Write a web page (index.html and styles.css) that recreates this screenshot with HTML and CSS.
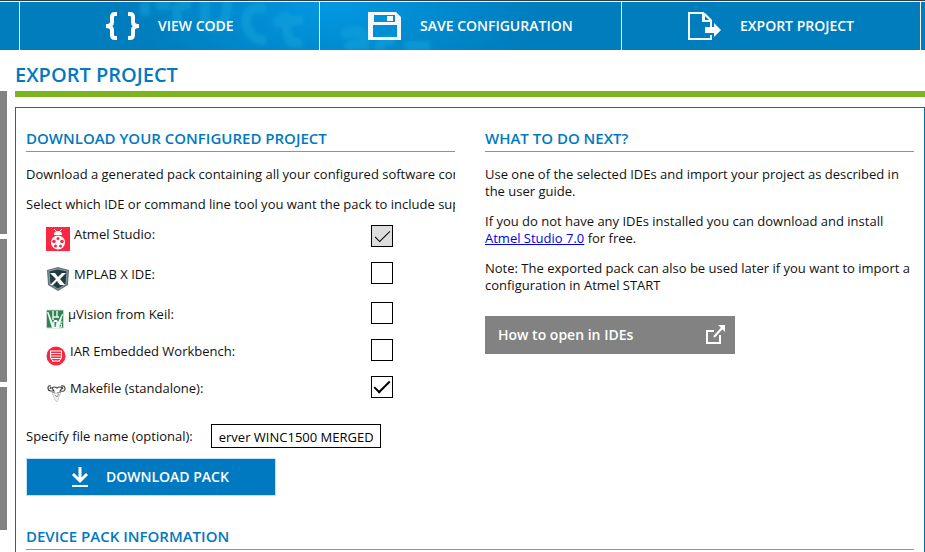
FILE: index.html
```html
<!DOCTYPE html>
<html lang="en">
<head>
<meta charset="utf-8">
<title>Export project</title>
<link rel="stylesheet" href="styles.css">
</head>
<body>
<nav class="toolbar">
  <svg class="backdrop" viewBox="0 0 925 48" preserveAspectRatio="none" aria-hidden="true">
    <defs>
      <radialGradient id="glow"><stop offset="0" stop-color="#0298e2"/><stop offset="1" stop-color="#0298e2" stop-opacity="0"/></radialGradient>
      <filter id="soft"><feGaussianBlur stdDeviation="2"/></filter>
    </defs>
    <ellipse cx="335" cy="4" rx="205" ry="90" fill="url(#glow)"/>
    <g fill="none" stroke="#1ba6dc" stroke-opacity=".5" stroke-width="10" filter="url(#soft)">
      <path d="M145 0v14M156 3h14M177 22V6q4-5 14-3M205-4v16q0 14 12 12q11-2 10-28M266 7q-19-4-20 12q2 20 20 19M284 10l4 24q2 9 14 6M274 20l29-2"/>
      <path d="M342 33q15-7 22 0v15M348 48q2-8 16-6M380 48q-2-12 15-10M405 44h25"/>
    </g>
  </svg>
  <button class="tool" type="button">
    <svg class="tool-icon" viewBox="0 0 34 28" aria-hidden="true"><path d="M11 2H9Q6 2 6 5v5q0 4-6 4q6 0 6 4v5q0 3 3 3h2M22 2h2q3 0 3 3v5q0 4 6 4q-6 0-6 4v5q0 3-3 3h-2" fill="none" stroke="#fff" stroke-width="4"/></svg>
    <span>VIEW CODE</span>
  </button>
  <button class="tool tool-save" type="button">
    <svg class="tool-icon" viewBox="0 0 34 28" aria-hidden="true"><path fill="#f4f8fb" fill-rule="evenodd" d="M0 0h28l5 5v23H0zM6 3v7h21V3zM5 13v12h24V13z"/><path fill="#f4f8fb" d="M19 4h6v5h-6z"/></svg>
    <span>SAVE CONFIGURATION</span>
  </button>
  <button class="tool tool-export" type="button">
    <svg class="tool-icon" viewBox="0 0 34 28" aria-hidden="true"><path fill="none" stroke="#f4f8fb" stroke-width="2" d="M23 23v4H1V1h14l8 8v6M15 1v8h8"/><path fill="#f4f8fb" d="M14 1h3l7 7v2H14z"/><path fill="#007dbd" d="M17 4l4 4h-4z"/><path fill="#fff" d="M17 15h9v-4l7 7-7 7v-4h-9z"/></svg>
    <span>EXPORT PROJECT</span>
  </button>
</nav>
<div class="page">
  <aside class="rail"><div></div><div></div><div></div></aside>
  <main class="main">
    <h1>EXPORT PROJECT</h1>
    <div class="panel">
      <div class="columns">
        <section class="download">
          <h2>DOWNLOAD YOUR CONFIGURED PROJECT</h2>
          <p class="clip">Download a generated pack containing all your configured software components.</p>
          <p class="clip">Select which IDE or command line tool you want the pack to include support for:</p>
          <ul class="tools">
            <li class="row row-large">
              <label for="studio"><svg class="logo logo-large" viewBox="0 0 24 24" aria-hidden="true"><path fill="#fb2841" d="M0 0h24v24H0z"/><path fill="none" stroke="#fff" d="M8 2l3 3M16 2l-3 3"/><path fill="#fff" d="M8 8q0-4 4-4t4 4z"/><ellipse cx="12" cy="15.500" rx="7" ry="7" fill="#fff"/><g fill="#fb2841"><circle cx="12" cy="11.500" r="1.500"/><circle cx="8" cy="14.500" r="1.800"/><circle cx="16" cy="14.500" r="1.800"/><circle cx="9.500" cy="19" r="1.500"/><circle cx="14.500" cy="19" r="1.500"/></g></svg><span>Atmel Studio:</span></label>
              <input id="studio" type="checkbox" checked disabled>
            </li>
            <li class="row row-large">
              <label for="mplab"><svg class="logo logo-large" viewBox="0 0 24 24" aria-hidden="true"><path fill="#657579" d="M12 0l11 3-1 15-10 6-10-6L1 3z"/><path fill="#203c45" stroke="#bcc8ca" stroke-width=".6" d="M12 2l9 2-1 13-8 5-8-5L3 4z"/><path fill="#fff" d="M4 6h5l3 4 4-4h4l-6 6 5 6h-5l-3-4-4 4H4l6-6z"/></svg><span>MPLAB X IDE:</span></label>
              <input id="mplab" type="checkbox">
            </li>
            <li class="row">
              <label for="keil"><svg class="logo logo-keil" viewBox="0 0 18 20" aria-hidden="true"><rect x=".5" y="1" width="17" height="18" rx="1" fill="#2c8457" stroke="#c9d7d0"/><path fill="#f0f7f3" d="M1 3h1.500L6 12l1 2 1-3h3l1 2L16 5h1l-4 14H6z"/><path fill="none" stroke="#f0f7f3" stroke-width="1.400" d="M7 2v9M7 8h4V2M11 8h2"/><path fill="#2c8457" d="M8.500 13h2l-1 5h-1z"/><path fill="none" stroke="#fff" d="M16.500 13h-3v2h2v3h-3"/></svg><span>µVision from Keil:</span></label>
              <input id="keil" type="checkbox">
            </li>
            <li class="row">
              <label for="iar"><svg class="logo logo-iar" viewBox="0 0 20 20" aria-hidden="true"><circle cx="10" cy="10" r="9.500" fill="#f6273d"/><path fill="none" stroke="#fff" d="M4 5h12M4 7.500h12M4 10h12M5 12.500h10M6 15h8M4.500 5v6q0 2 3 4.500M15.500 5v6q0 2-3 4.500"/></svg><span>IAR Embedded Workbench:</span></label>
              <input id="iar" type="checkbox">
            </li>
            <li class="row">
              <label for="make"><svg class="logo logo-iar" viewBox="0 0 20 20" aria-hidden="true"><path fill="none" stroke="#444" stroke-width="1.200" d="M5 3Q2 2 2 5q0 3 3 3h3L6 5q2-2 5 0q3-2 5 0l-2 3q5 1 5-2q0-4-4-3M5 4l-1 2M16 4l1 2"/><path fill="#f2f2f2" stroke="#bbb" stroke-width=".7" d="M6 9l3 8 2 2 4-10-3 1H9z"/><path fill="none" stroke="#777" stroke-width=".8" d="M6 9l3 1M11 10l4-1M9 12l2 2 2-3"/></svg><span>Makefile (standalone):</span></label>
              <input id="make" type="checkbox" checked>
            </li>
          </ul>
          <div class="filename"><label for="name">Specify file name (optional):</label><input id="name" type="text" value="erver WINC1500 MERGED"></div>
          <button class="download-button" type="button"><svg width="18" height="20" viewBox="0 0 18 20" aria-hidden="true"><path fill="none" stroke="#fff" stroke-width="3" d="M9 0v13M2 7l7 7 7-7"/><path fill="#fff" d="M1 18h16v2H1z"/></svg><span>DOWNLOAD PACK</span></button>
        </section>
        <section class="next">
          <h2>WHAT TO DO NEXT?</h2>
          <p>Use one of the selected IDEs and import your project as described in the user guide.</p>
          <p>If you do not have any IDEs installed you can download and install <a href="#">Atmel Studio 7.0</a> for free.</p>
          <p>Note: The exported pack can also be used later if you want to import a configuration in Atmel START</p>
          <button class="howto" type="button"><span>How to open in IDEs</span><svg width="19" height="20" viewBox="0 0 19 20" aria-hidden="true"><path fill="none" stroke="#fff" stroke-width="2" d="M8 6H1v12h13v-8M8 12l9-10"/><path fill="#fff" d="M12 0h7v7z"/></svg></button>
        </section>
      </div>
      <section class="device"><h2>DEVICE PACK INFORMATION</h2></section>
    </div>
  </main>
</div>
</body>
</html>
```
FILE: styles.css
```css
* { box-sizing: border-box; }
body {
  margin: 0;
  background: #fff;
  color: #111;
  font: 13px/17px "Open Sans", "Noto Sans", sans-serif;
}
button, input { font: inherit; margin: 0; }

.toolbar {
  position: relative;
  display: grid;
  grid-template-columns: 300px 302px 1fr;
  height: 50px;
  padding: 0 4px 0 19px;
  border-top: 1px solid #333b4c;
  background: #007dbd;
}
.backdrop { position: absolute; inset: 1px 0 0; width: 100%; height: 48px; }
.toolbar::before { content: ""; position: absolute; inset: 0 0 auto; height: 1px; background: #e8f4fb; }
.tool {
  position: relative;
  display: flex;
  align-items: center;
  gap: 18px;
  padding: 0 0 0 86px;
  border: 0;
  border-left: 1px solid #fff;
  background: none;
  color: #fff;
  font-size: 14px;
  font-weight: 600;
}
.tool-icon { width: 34px; height: 28px; }
.tool-save { padding-left: 48px; }
.tool-export { padding-left: 66px; border-right: 1px solid #fff; }

.page { display: flex; gap: 8px; }
.rail { display: flex; flex: 0 0 7px; flex-direction: column; gap: 5px; padding-top: 41px; }
.rail div { height: 143px; background: #828282; }
.main { flex: 1; min-width: 0; }
h1 {
  margin: 0;
  padding: 12px 0 4px;
  border-bottom: 6px solid #7ab51d;
  color: #0079c1;
  font-size: 20px;
  font-weight: 600;
  line-height: 25px;
}
h2 {
  margin: 0 0 14px;
  padding-bottom: 2px;
  border-bottom: 1px solid #7ab51d;
  color: #0079c1;
  font-size: 15px;
  font-weight: 600;
  line-height: 22px;
}
.panel { margin-top: 10px; padding: 19px 10px 0; border: 1px solid #0073a8; border-bottom: 0; }
.columns { display: grid; grid-template-columns: 1fr 1fr; gap: 30px; }
.download { min-width: 0; overflow: hidden; }
p { margin: 13px 0; }
.clip { overflow: hidden; white-space: nowrap; }

.tools { margin: 0; padding: 0 0 0 20px; list-style: none; }
.row { display: grid; grid-template-columns: 325px 22px; align-items: start; height: 37px; }
.row-large { height: 40px; }
.row label { display: flex; gap: 4px; }
.logo { margin-top: 3px; }
.logo-large { width: 24px; height: 24px; margin-top: 1px; }
.logo-keil { width: 18px; height: 20px; }
.logo-iar { width: 20px; height: 20px; }
.row input {
  display: grid;
  place-content: center;
  width: 22px;
  height: 22px;
  margin-top: -4px;
  border: 1px solid #000;
  background: #fff;
  appearance: none;
}
.row input:disabled { margin-top: -1px; background: #ddd; }
.row input:checked::before {
  content: "";
  width: 14px;
  height: 6px;
  margin-bottom: 4px;
  border: solid #000;
  border-width: 0 0 2px 2px;
  transform: rotate(-45deg);
}
.row input:disabled::before { border-width: 0 0 1px 1px; }
.filename { display: flex; align-items: center; gap: 18px; padding-top: 7px; }
.filename input { width: 170px; height: 24px; padding: 2px 7px 0; border: 1px solid #000; }
.download-button,
.howto {
  display: flex;
  align-items: center;
  width: 250px;
  height: 38px;
  color: #fff;
  font-size: 14px;
  font-weight: 600;
  line-height: 18px;
}
.download-button {
  gap: 17px;
  margin-top: 10px;
  padding: 0 0 0 44px;
  border: 1px solid #c5e2f4;
  background: #0079c1;
}
.howto {
  justify-content: space-between;
  margin-top: 22px;
  padding: 0 10px 0 13px;
  border: 0;
  background: #828282;
}
a { color: #00e; }
.device { padding: 29px 0 2px; }
.device h2 { margin-bottom: 0; }
```
